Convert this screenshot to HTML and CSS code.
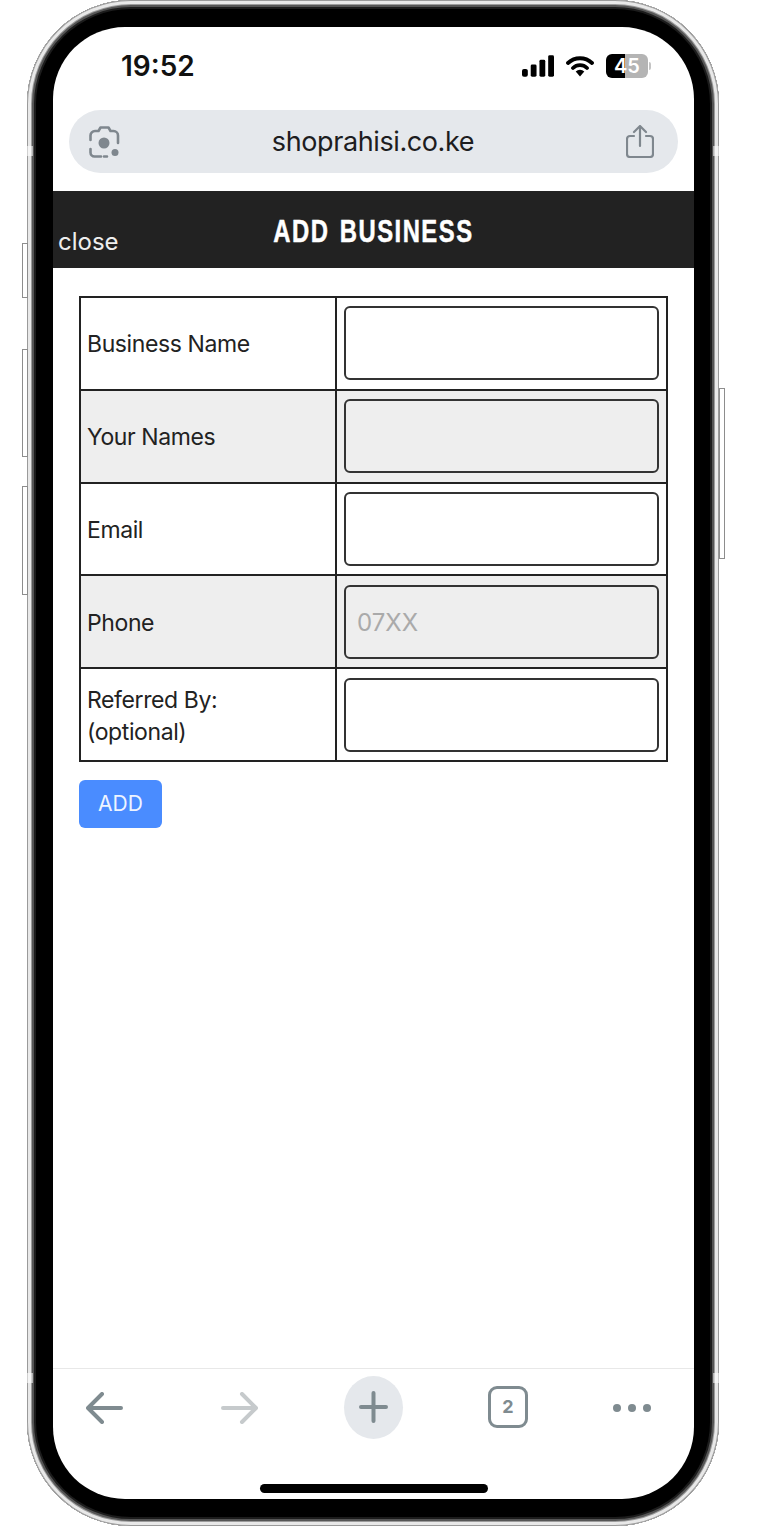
FILE: index.html
```html
<!DOCTYPE html>
<html lang="en">
<head>
    <meta charset="UTF-8">
    <meta name="viewport" content="width=device-width, initial-scale=1.0">
    <title>Add Business</title>
    <link rel="stylesheet" href="styles.css">
</head>
<body>
    <div class="phone">
        <span class="side-btn left-1"></span>
        <span class="side-btn left-2"></span>
        <span class="side-btn left-3"></span>
        <span class="side-btn right-1"></span>
        <span class="band band-tl"></span>
        <span class="band band-tr"></span>
        <span class="band band-bl"></span>
        <span class="band band-br"></span>

        <div class="screen">
            <div class="status">
                <span class="time">19:52</span>
                <div class="status-icons">
                    <svg class="signal" width="32" height="22" viewBox="0 0 33 22">
                        <rect x="0" y="14" width="6" height="8" rx="2"/>
                        <rect x="9" y="9.5" width="6" height="12.5" rx="1.5"/>
                        <rect x="18" y="4.5" width="6" height="17.5" rx="1.5"/>
                        <rect x="27" y="0" width="6" height="22" rx="1.5"/>
                    </svg>
                    <svg class="wifi" width="28" height="22" viewBox="0 0 28 22">
                        <path d="M2 8a17.500 17.500 0 0 1 24 0M7 13a10 10 0 0 1 14 0" fill="none" stroke="#000" stroke-width="3.800" stroke-linecap="round"/>
                        <path d="M9.700 16.400a6.200 6.200 0 0 1 8.600 0L14 21.500z"/>
                    </svg>
                    <div class="battery"><span>45</span></div>
                </div>
            </div>

            <div class="url-bar">
                <svg width="31" height="32" viewBox="0 0 31 32" fill="none" stroke="#7f878e" stroke-width="2.600" stroke-linecap="round" stroke-linejoin="round">
                    <path d="M1.500 14V9.500a4.500 4.500 0 0 1 4.500-4.500h3.500l2-3.500h8l2 3.500h3a4.500 4.500 0 0 1 4.500 4.500V17"/>
                    <path d="M1.500 23v3.500a4 4 0 0 0 4 4h6.500M15 30.500h3"/>
                    <circle cx="15" cy="17" r="5.500" fill="#7f878e" stroke="none"/>
                    <circle cx="26" cy="26.500" r="3.500" fill="#7f878e" stroke="none"/>
                </svg>
                <span class="url">shoprahisi.co.ke</span>
                <svg width="28" height="33" viewBox="0 0 28 33" fill="none" stroke="#7f878e" stroke-width="2.200" stroke-linecap="round" stroke-linejoin="round">
                    <path d="M8 11H4a3 3 0 0 0-3 3v15a3 3 0 0 0 3 3h20a3 3 0 0 0 3-3V14a3 3 0 0 0-3-3h-4"/>
                    <path d="M14 21V1.500M8 7l6-6 6 6"/>
                </svg>
            </div>

            <div class="topbar">
                <a class="close">close</a>
                <h1>ADD BUSINESS</h1>
                <span></span>
            </div>

            <form class="content">
                <table class="biz-table">
                    <tr>
                        <td class="label">Business Name</td>
                        <td class="field"><input type="text"></td>
                    </tr>
                    <tr>
                        <td class="label">Your Names</td>
                        <td class="field"><input type="text"></td>
                    </tr>
                    <tr>
                        <td class="label">Email</td>
                        <td class="field"><input type="text"></td>
                    </tr>
                    <tr>
                        <td class="label">Phone</td>
                        <td class="field"><input type="text" placeholder="07XX"></td>
                    </tr>
                    <tr>
                        <td class="label">Referred By:<br>(optional)</td>
                        <td class="field"><input type="text"></td>
                    </tr>
                </table>
                <button type="button" class="add-btn">ADD</button>
            </form>

            <div class="toolbar">
                <svg class="back" width="37" height="32" viewBox="0 0 37 32" fill="none" stroke="#7f8b90" stroke-width="4" stroke-linecap="round" stroke-linejoin="round">
                    <path d="M35 16H3M16 2L2 16l14 14"/>
                </svg>
                <svg class="forward" width="37" height="32" viewBox="0 0 37 32" fill="none" stroke="#c6cacc" stroke-width="4" stroke-linecap="round" stroke-linejoin="round">
                    <path d="M2 16h32M21 2l14 14-14 14"/>
                </svg>
                <div class="new-tab">
                    <svg width="29" height="32" viewBox="0 0 29 32" fill="none" stroke="#7f8b90" stroke-width="4" stroke-linecap="round">
                        <path d="M2 16h25M14.500 2v28"/>
                    </svg>
                </div>
                <div class="tabs">2</div>
                <svg class="more" width="38" height="8" viewBox="0 0 38 8" fill="#7f8b90">
                    <circle cx="4" cy="4" r="4"/>
                    <circle cx="19" cy="4" r="4"/>
                    <circle cx="34" cy="4" r="4"/>
                </svg>
            </div>
            <div class="home-bar"></div>
        </div>
    </div>
</body>
</html>
```

FILE: styles.css
```css
* {
    box-sizing: border-box;
    margin: 0;
    padding: 0;
}

body {
    font-family: Inter, 'Liberation Sans', sans-serif;
    background: #fff;
    color: #222;
    width: 767px;
    height: 1535px;
    overflow: hidden;
}

.phone {
    position: relative;
    width: 692px;
    height: 1526px;
    margin-left: 27px;
    padding: 27px 25px 27px 26px;
    background: #000;
    border-radius: 104px;
    box-shadow:
        inset 0 0 0 1px #9a9a9a,
        inset 0 0 0 4px #e8e8e8,
        inset 0 0 0 5px #9c9c9c,
        inset 0 0 0 7px #555,
        inset 0 0 0 9px #1c1c1c;
}

.side-btn {
    position: absolute;
    width: 6px;
    background: #fff;
    border: 1px solid #8d8d8d;
}

.left-1 { left: -5px; top: 243px; height: 55px; }
.left-2 { left: -5px; top: 349px; height: 108px; }
.left-3 { left: -5px; top: 486px; height: 109px; }
.right-1 { right: -6px; top: 388px; height: 171px; }

.band {
    position: absolute;
    width: 6px;
    height: 10px;
    background: rgba(255, 255, 255, 0.55);
}

.band-tl { left: 0; top: 146px; }
.band-tr { right: 0; top: 146px; }
.band-bl { left: 0; top: 1373px; }
.band-br { right: 0; top: 1373px; }

.screen {
    display: flex;
    flex-direction: column;
    height: 100%;
    background: #fff;
    border-radius: 72px;
    overflow: hidden;
}

.status {
    display: flex;
    justify-content: space-between;
    align-items: center;
    height: 83px;
    padding: 0 43px 5px 68px;
    flex-shrink: 0;
}

.time {
    font-size: 28px;
    font-weight: 600;
    color: #111;
}

.status-icons {
    display: flex;
    align-items: center;
    gap: 12px;
}

.battery {
    position: relative;
    width: 42px;
    height: 24px;
    border-radius: 6px;
    background: linear-gradient(to right, #000 19px, #b4b4b4 19px);
    color: #fff;
    font-size: 20px;
    font-weight: 600;
    line-height: 24px;
    text-align: center;
    margin-right: 3px;
}

.battery::after {
    content: "";
    position: absolute;
    right: -3px;
    top: 8px;
    width: 2px;
    height: 8px;
    background: #c4c4c4;
    border-radius: 0 2px 2px 0;
}

.url-bar {
    display: flex;
    justify-content: space-between;
    align-items: center;
    height: 63px;
    margin: 0 16px;
    padding: 0 24px 0 20px;
    background: #e5e8ec;
    border-radius: 32px;
    flex-shrink: 0;
}

.url {
    font-size: 27px;
    letter-spacing: -0.4px;
    color: #1d1d1f;
}

.topbar {
    display: grid;
    grid-template-columns: 1fr auto 1fr;
    align-items: center;
    height: 77px;
    margin-top: 18px;
    padding-left: 6px;
    background: #222;
    color: #fff;
    flex-shrink: 0;
}

.close {
    align-self: end;
    padding-bottom: 12px;
    margin-left: -1px;
    font-size: 24px;
    color: #eee;
}

h1 {
    font-family: 'Liberation Sans', sans-serif;
    font-size: 32px;
    font-weight: 700;
    letter-spacing: 2px;
    word-spacing: 3px;
    margin-left: -6px;
    padding-top: 4px;
    -webkit-text-stroke: 0.5px #fff;
    transform: scaleX(0.745);
}

.content {
    flex: 1;
    padding: 28px 26px 0;
}

.biz-table {
    width: 589px;
    border-collapse: collapse;
    table-layout: fixed;
}

.biz-table td {
    height: 92.800px;
    border: 2px solid #222;
    padding: 0 7px;
    font-size: 23px;
    letter-spacing: -0.4px;
    line-height: 32px;
    color: #222;
}

.biz-table .label {
    width: 256px;
    padding: 2px 6px 0;
}

.biz-table tr:nth-child(even) td {
    background: #eee;
}

.field input {
    display: block;
    width: 315px;
    height: 74px;
    border: 2px solid #333;
    border-radius: 6px;
    background: transparent;
    padding: 2px 12px 0 11px;
    font-family: inherit;
    font-size: 24px;
}

.field input::placeholder {
    color: #aaa;
}

.add-btn {
    display: block;
    width: 83px;
    height: 48px;
    margin-top: 18px;
    border: none;
    border-radius: 6px;
    background: #4a8cff;
    color: #eef4ff;
    font-family: inherit;
    font-size: 21px;
}

.toolbar {
    display: flex;
    align-items: center;
    gap: 85px;
    height: 79px;
    padding-left: 33px;
    border-top: 1px solid #e8e8e8;
    flex-shrink: 0;
}

.back {
    margin-right: 13px;
}

.forward {
    margin-right: 1px;
}

.new-tab {
    display: flex;
    align-items: center;
    justify-content: center;
    width: 59px;
    height: 63px;
    margin-bottom: 2px;
    border-radius: 50%;
    background: #e5e8ec;
}

.tabs {
    width: 40px;
    height: 42px;
    margin-bottom: 2px;
    border: 3.500px solid #7f8b90;
    border-radius: 9px;
    color: #7f8b90;
    font-size: 18px;
    font-weight: 700;
    line-height: 36px;
    text-align: center;
}

.home-bar {
    width: 228px;
    height: 9px;
    margin: 37px auto 6px;
    background: #000;
    border-radius: 5px;
    flex-shrink: 0;
}
```
